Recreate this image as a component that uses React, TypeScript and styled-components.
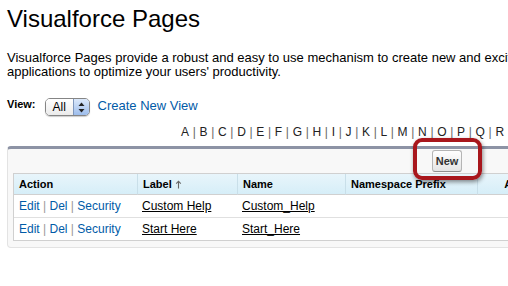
import React from "react";
import styled, { createGlobalStyle } from "styled-components";

const letters = "ABCDEFGHIJKLMNOPQRSTUVWXYZ".split("").concat(["Other", "All"]);

interface PageRow {
  label: string;
  name: string;
}

const rows: Array<PageRow> = [
  { label: "Custom Help", name: "Custom_Help" },
  { label: "Start Here", name: "Start_Here" },
];

const GlobalStyle = createGlobalStyle`
  html, body {
    margin: 0;
    padding: 0;
    background: #fff;
    overflow: hidden;
  }
  body {
    font-family: "Liberation Sans", Arial, sans-serif;
    color: #000;
  }
`;

export default function App() {
  return (
    <>
      <GlobalStyle />
      <Page>
        <Title>Visualforce Pages</Title>
        <Description>
          Visualforce Pages provide a robust and easy to use mechanism to create
          new and exciting custom user interfaces for your
          <br />
          applications to optimize your users' productivity.
        </Description>

        <ViewRow>
          <ViewLabel>View:</ViewLabel>
          <SelectBox>
            <SelectValue>All</SelectValue>
            <SelectArrows>
              <svg width="7" height="11" viewBox="0 0 7 11">
                <path d="M3.5 0.5 L6.5 4 L0.5 4 Z" fill="#222" />
                <path d="M3.5 10.5 L6.5 7 L0.5 7 Z" fill="#222" />
              </svg>
            </SelectArrows>
          </SelectBox>
          <CreateLink>Create New View</CreateLink>
        </ViewRow>

        <Rolodex>
          {letters.map((letter, i) => (
            <React.Fragment key={letter}>
              {i > 0 && <RolodexSep> | </RolodexSep>}
              <RolodexLetter>{letter}</RolodexLetter>
            </React.Fragment>
          ))}
        </Rolodex>

        <Panel>
          <PanelHeader>
            <NewButton>
              New
              <Callout />
            </NewButton>
          </PanelHeader>
          <ListTable>
            <thead>
              <tr>
                <HeadCell $width={123} $first>
                  Action
                </HeadCell>
                <HeadCell $width={100}>
                  Label{" "}
                  <SortArrow width="7" height="9" viewBox="0 0 7 9">
                    <path
                      d="M3.5 1.2 V8.5 M1.2 3.6 L3.5 1.2 L5.8 3.6"
                      stroke="#666"
                      strokeWidth="1.1"
                      fill="none"
                    />
                  </SortArrow>
                </HeadCell>
                <HeadCell $width={108}>Name</HeadCell>
                <HeadCell $width={132}>Namespace Prefix</HeadCell>
                <HeadCell $width={114} $center>
                  Api Version
                </HeadCell>
                <HeadCell>Description</HeadCell>
              </tr>
            </thead>
            <tbody>
              {rows.map((row, i) => (
                <tr key={row.name}>
                  <BodyCell $last={i === rows.length - 1}>
                    <ActionLink>Edit</ActionLink>
                    <ActionSep> | </ActionSep>
                    <ActionLink>Del</ActionLink>
                    <ActionSep> | </ActionSep>
                    <ActionLink>Security</ActionLink>
                  </BodyCell>
                  <BodyCell $last={i === rows.length - 1}>
                    <RecordLink>{row.label}</RecordLink>
                  </BodyCell>
                  <BodyCell $last={i === rows.length - 1}>
                    <RecordLink>{row.name}</RecordLink>
                  </BodyCell>
                  <BodyCell $last={i === rows.length - 1} />
                  <BodyCell $last={i === rows.length - 1} />
                  <BodyCell $last={i === rows.length - 1} />
                </tr>
              ))}
            </tbody>
          </ListTable>
        </Panel>
      </Page>
    </>
  );
}

const Page = styled.div`
  width: 760px;
  padding: 0 0 0 7px;
`;

const Title = styled.h1`
  margin: 5px 0 0;
  font-size: 24px;
  line-height: 28px;
  font-weight: normal;
`;

const Description = styled.p`
  margin: 18px 0 0;
  font-size: 13px;
  line-height: 14px;
  white-space: nowrap;
`;

const ViewRow = styled.div`
  display: flex;
  align-items: flex-start;
  margin-top: 19px;
  height: 18px;
`;

const ViewLabel = styled.span`
  font-size: 11px;
  line-height: 13px;
  font-weight: bold;
  margin-right: 9px;
`;

const SelectBox = styled.div`
  display: flex;
  box-sizing: border-box;
  width: 45px;
  height: 18px;
  border: 1px solid #858585;
  border-radius: 5px;
  overflow: hidden;
  box-shadow: 0 1px 1px rgba(0, 0, 0, 0.2);
`;

const SelectValue = styled.span`
  flex: 1;
  padding-left: 7px;
  font-size: 12px;
  line-height: 16px;
  background: linear-gradient(#ffffff, #ebebeb);
`;

const SelectArrows = styled.span`
  display: flex;
  align-items: center;
  justify-content: center;
  width: 15px;
  border-left: 1px solid #7f97bd;
  background: linear-gradient(#dbe8fa, #9dbdec);
`;

const CreateLink = styled.a`
  margin-left: 8px;
  font-size: 13px;
  line-height: 15px;
  color: #015ba7;
  cursor: pointer;
`;

const Rolodex = styled.div`
  margin-top: 9px;
  padding-left: 174px;
  font-size: 12px;
  line-height: 14px;
  white-space: nowrap;
`;

const RolodexLetter = styled.a`
  color: #222;
`;

const RolodexSep = styled.span`
  color: #666;
  white-space: pre;
  padding: 0 0.35px;
`;

const Panel = styled.div`
  margin-top: 7px;
  border: 1px solid #e3e3e3;
  border-top: 3px solid #8d93a5;
  border-radius: 4px;
  background: #f8f8f8;
  padding: 0 5px 6px;
`;

const PanelHeader = styled.div`
  display: flex;
  align-items: flex-start;
  height: 24px;
  box-sizing: border-box;
  padding: 1px 0 0 419px;
`;

const NewButton = styled.button`
  position: relative;
  box-sizing: border-box;
  width: 30px;
  height: 22px;
  padding: 0;
  border: 1px solid #b5b5b5;
  border-bottom-color: #8f8f8f;
  border-radius: 3px;
  background: linear-gradient(#ffffff, #e4e4e4);
  font-family: "Liberation Sans", Arial, sans-serif;
  font-size: 11px;
  font-weight: bold;
  color: #333;
`;

const Callout = styled.span`
  position: absolute;
  left: -20px;
  top: -13px;
  width: 69px;
  height: 42px;
  box-sizing: border-box;
  border: 4px solid #a8161c;
  border-radius: 9px;
  box-shadow: 1px 2px 4px rgba(0, 0, 0, 0.45);
  pointer-events: none;
  z-index: 2;
`;

const ListTable = styled.table`
  border-collapse: separate;
  border-spacing: 0;
  table-layout: fixed;
  width: 100%;
  border: 1px solid #d0d0d0;
  background: #fff;
`;

const HeadCell = styled.th<{ $width?: number; $first?: boolean; $center?: boolean }>`
  box-sizing: border-box;
  width: ${(p) => (p.$width ? `${p.$width}px` : "auto")};
  padding: 4px 5px 3px;
  line-height: 13px;
  font-size: 11px;
  font-weight: bold;
  text-align: ${(p) => (p.$center ? "center" : "left")};
  white-space: nowrap;
  background: linear-gradient(#e8f5fb, #d6eef8);
  border-bottom: 1px solid #d0d0d0;
  border-left: ${(p) => (p.$first ? "none" : "1px solid #c9dfe9")};
`;

const SortArrow = styled.svg`
  vertical-align: -1px;
`;

const BodyCell = styled.td<{ $last?: boolean }>`
  padding: 4px 5px 3px;
  line-height: 15px;
  font-size: 12px;
  white-space: nowrap;
  border-bottom: ${(p) => (p.$last ? "none" : "1px solid #e0e0e0")};
`;

const ActionLink = styled.a`
  color: #015ba7;
`;

const ActionSep = styled.span`
  color: #999;
  white-space: pre;
`;

const RecordLink = styled.a`
  color: #000;
  text-decoration: underline;
`;
